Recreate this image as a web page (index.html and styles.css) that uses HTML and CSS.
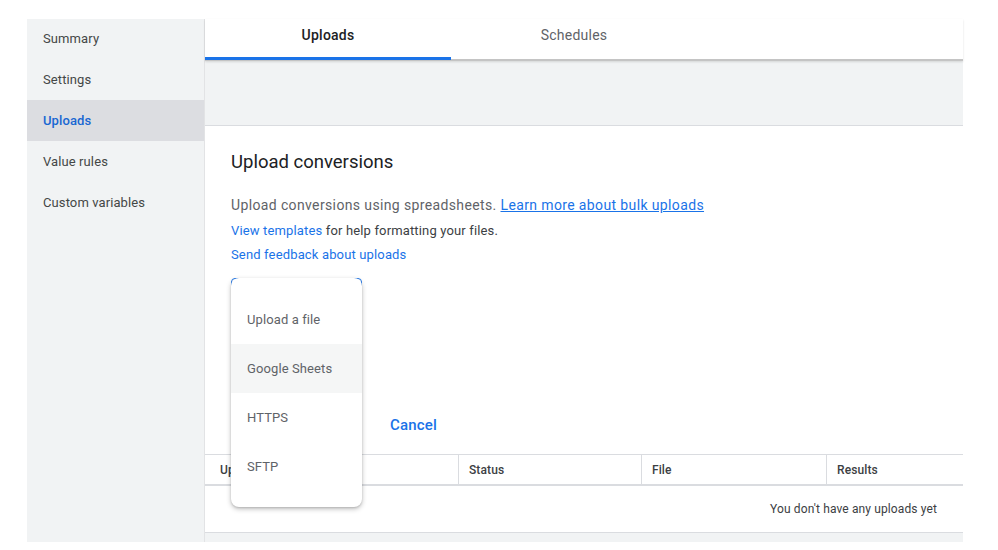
FILE: index.html
```html
<!DOCTYPE html>
<html lang="en">
<head>
  <meta charset="UTF-8">
  <title>Uploads</title>
  <link rel="stylesheet" href="styles.css">
</head>
<body>
  <div class="page">
    <nav class="sidebar">
      <a class="nav-item first">Summary</a>
      <a class="nav-item">Settings</a>
      <a class="nav-item active">Uploads</a>
      <a class="nav-item">Value rules</a>
      <a class="nav-item">Custom variables</a>
    </nav>

    <main class="main">
      <div class="tabs">
        <div class="tab active">Uploads</div>
        <div class="tab">Schedules</div>
        <div class="tab-rest"></div>
      </div>
      <div class="band"></div>

      <section class="card">
        <h2>Upload conversions</h2>
        <p class="lead">Upload conversions using spreadsheets. <a href="#">Learn more about bulk uploads</a></p>
        <p class="small first-small"><a href="#">View templates</a> for help formatting your files.</p>
        <p class="small"><a href="#">Send feedback about uploads</a></p>

        <div class="source-button"></div>
        <div class="spacer"></div>

        <div class="actions">
          <div class="upload-button"></div>
          <a class="cancel">Cancel</a>
        </div>

        <ul class="menu">
          <li>Upload a file</li>
          <li class="hover">Google Sheets</li>
          <li>HTTPS</li>
          <li>SFTP</li>
        </ul>
      </section>

      <div class="table">
        <div class="row head">
          <div class="cell c1">Upload</div>
          <div class="cell c2">Status</div>
          <div class="cell c3">File</div>
          <div class="cell c4">Results</div>
        </div>
        <div class="row empty">You don't have any uploads yet</div>
      </div>
      <div class="footer-band"></div>
    </main>
  </div>
</body>
</html>
```

FILE: styles.css
```css
body {
  margin: 0;
  background: #fff;
  font-family: Roboto, "Liberation Sans", Arial, sans-serif;
  color: #3c4043;
}

.page {
  display: flex;
  padding: 19px 35px 0 27px;
  height: 523px;
}

.sidebar {
  width: 177px;
  background: #f1f3f4;
  border-right: 1px solid #e2e3e5;
  display: flex;
  flex-direction: column;
}
.nav-item {
  height: 41px;
  line-height: 41px;
  padding-left: 16px;
  font-size: 13px;
  color: #444746;
  letter-spacing: 0.1px;
}
.nav-item.first {
  height: 40px;
  line-height: 39px;
}
.nav-item.active {
  background: #dcdde1;
  color: #1967d2;
  font-weight: 500;
}

.main {
  flex: 1;
  display: flex;
  flex-direction: column;
  background: #f1f3f4;
}

.tabs {
  display: flex;
  height: 40px;
  background: #fff;
  border-bottom: 2px solid #c4c4c4;
  box-shadow: 0 1px 2px rgba(0,0,0,0.12);
  position: relative;
  z-index: 1;
}
.tab {
  width: 246px;
  text-align: center;
  line-height: 33px;
  font-size: 14px;
  font-weight: 400;
  color: #5f6368;
  position: relative;
  letter-spacing: 0.25px;
}
.tab.active {
  color: #202124;
  font-weight: 500;
}
.tab.active::after {
  content: "";
  position: absolute;
  left: 0;
  right: 0;
  bottom: -1px;
  height: 3px;
  background: #1a73e8;
}

.band {
  height: 64px;
  border-bottom: 1px solid #dadce0;
}

.card {
  background: #fff;
  padding: 25px 26px 0;
  position: relative;
}
.card h2 {
  margin: 0;
  font-size: 18.5px;
  font-weight: 400;
  line-height: 22px;
  color: #202124;
}
.card p {
  margin: 0;
}
.lead {
  margin-top: 22px !important;
  font-size: 14px;
  line-height: 20px;
  color: #5f6368;
  letter-spacing: 0.37px;
}
.lead a {
  color: #1a73e8;
  text-decoration: underline;
}
.small {
  font-size: 13px;
  line-height: 20px;
  margin-top: 4px !important;
  color: #3c4043;
  letter-spacing: 0.15px;
}
.small.first-small {
  margin-top: 6px !important;
}
.small a {
  color: #1a73e8;
  text-decoration: none;
}

.source-button {
  margin-top: 13px;
  width: 129px;
  height: 34px;
  border: 1.5px solid #1a73e8;
  border-radius: 4px;
}
.spacer {
  height: 93px;
}
.actions {
  display: flex;
  align-items: center;
  height: 36px;
  padding-bottom: 11px;
}
.upload-button {
  width: 131px;
  margin-right: 28px;
}
.cancel {
  font-size: 15px;
  font-weight: 500;
  color: #1a73e8;
  letter-spacing: 0.2px;
}

.menu {
  position: absolute;
  left: 26px;
  top: 152px;
  width: 131px;
  margin: 0;
  padding: 17px 0 16px;
  list-style: none;
  background: #fff;
  border-radius: 8px;
  box-shadow: 0 2px 5px rgba(0,0,0,0.25), 0 1px 2px rgba(0,0,0,0.12);
  z-index: 5;
}
.menu li {
  height: 49px;
  line-height: 49px;
  padding-left: 16px;
  font-size: 13px;
  color: #5f6368;
  letter-spacing: 0.1px;
}
.menu li.hover {
  background: #f5f6f6;
}

.table {
  background: #fff;
  font-size: 12px;
  color: #3c4043;
}
.row {
  display: flex;
}
.row.head {
  height: 29px;
  border-top: 1px solid #dadce0;
  border-bottom: 2px solid #dadce0;
}
.cell {
  line-height: 30px;
  padding-left: 10px;
  border-left: 1px solid #dadce0;
  font-weight: 500;
  letter-spacing: 0.1px;
}
.c1 {
  width: 238px;
  padding-left: 15px;
  border-left: none;
}
.c2 {
  width: 172px;
}
.c3 {
  width: 174px;
}
.c4 {
  flex: 1;
}
.row.empty {
  height: 46px;
  line-height: 46px;
  justify-content: flex-end;
  padding-right: 26px;
  border-bottom: 1px solid #dadce0;
  letter-spacing: 0.12px;
}

.footer-band {
  flex: 1;
}
```
